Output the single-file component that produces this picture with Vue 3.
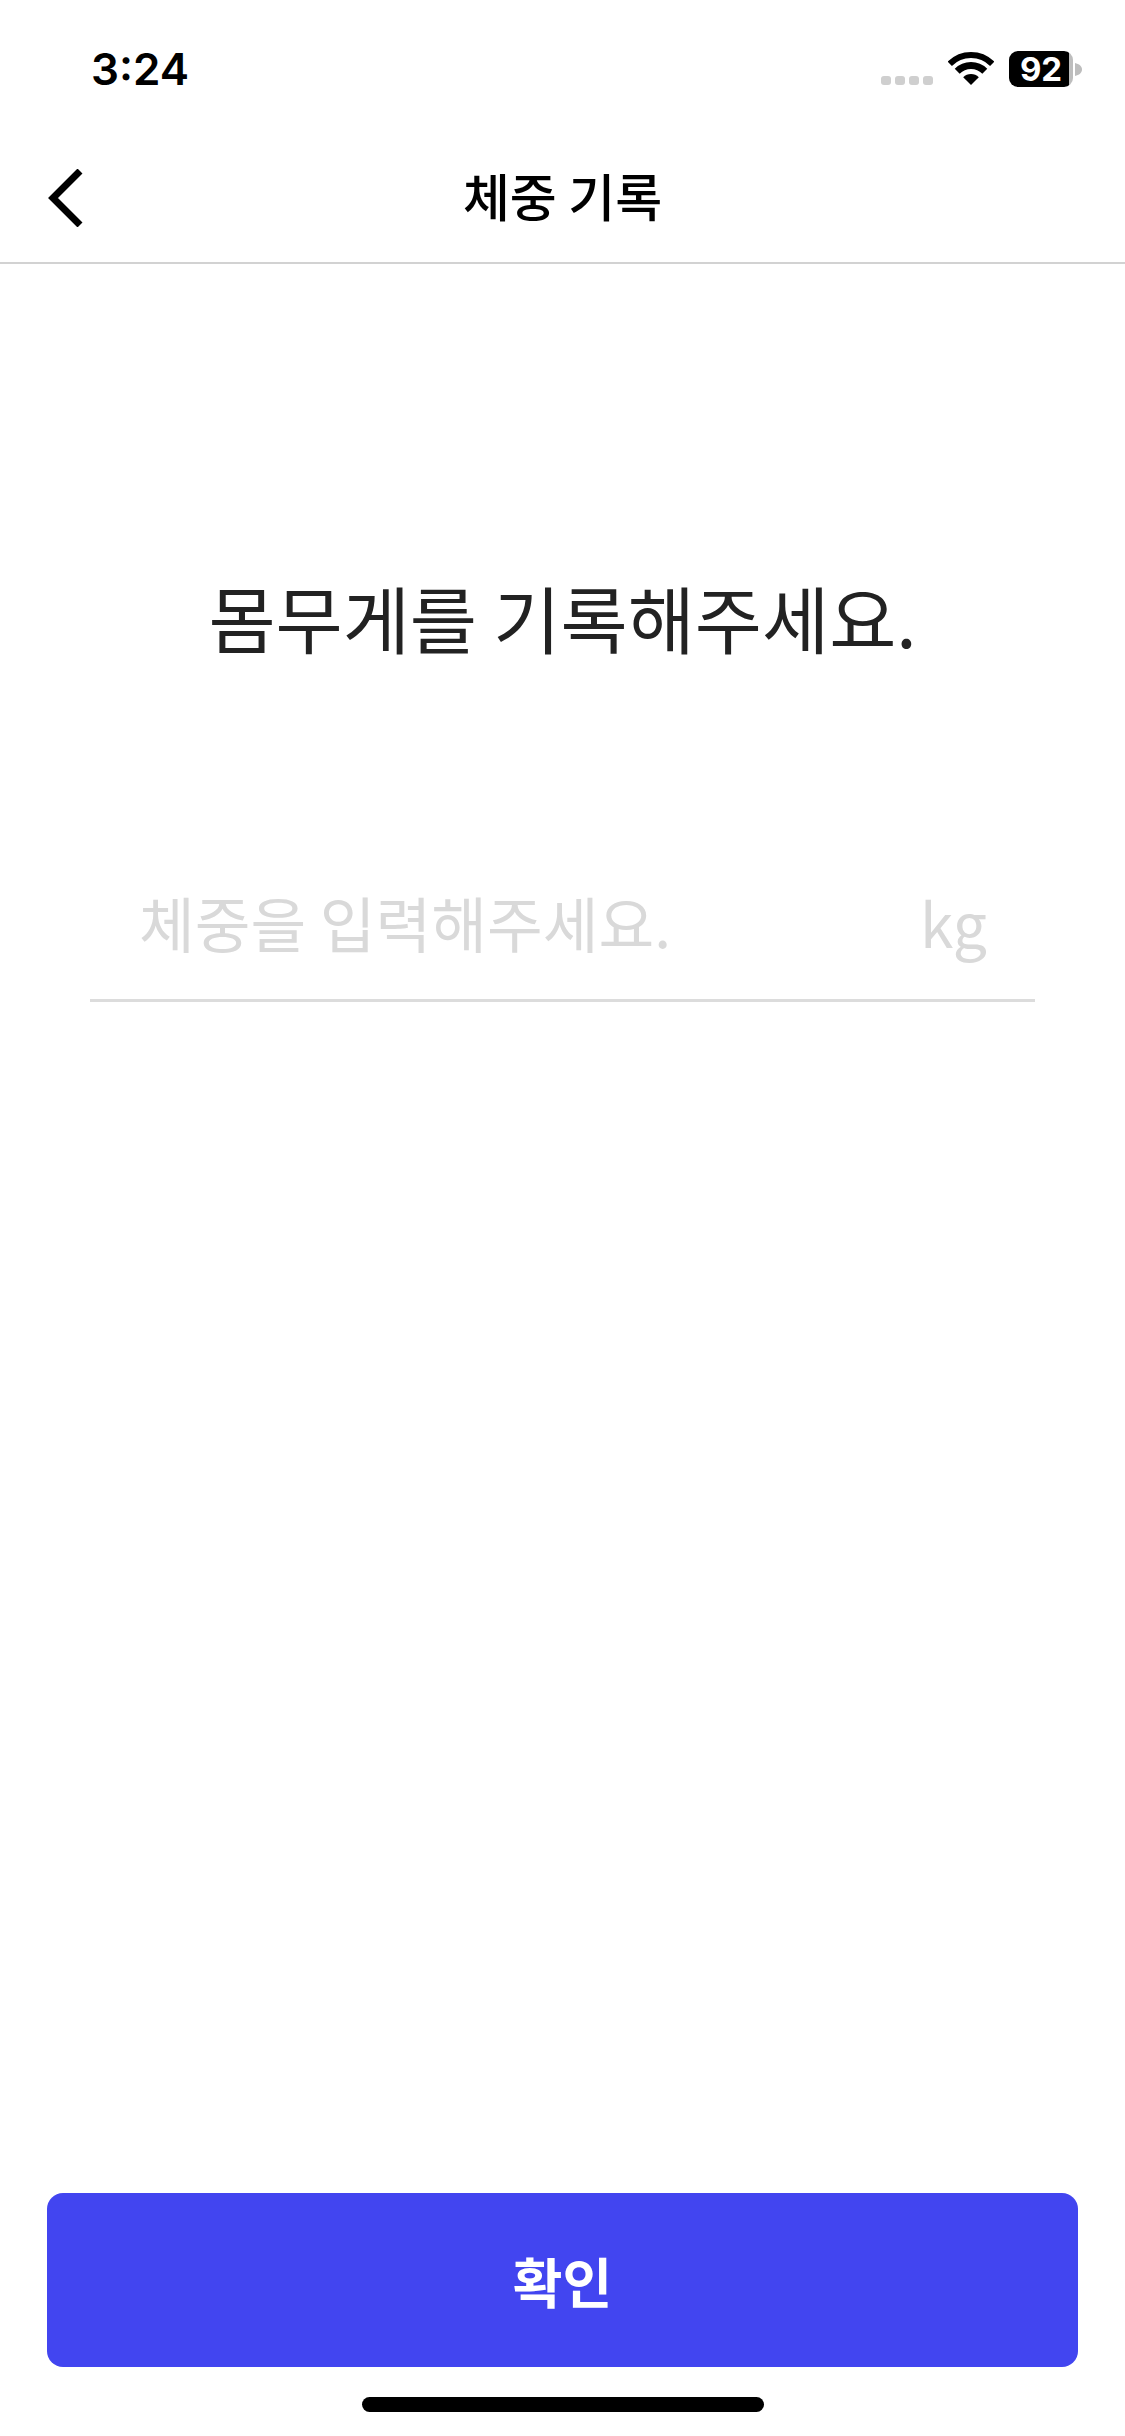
<script setup>
const dots = [1, 2, 3, 4]
</script>

<template>
  <div class="screen">
    <div class="status">
      <span class="time">3:24</span>
      <div class="indicators">
        <div class="dots"><i v-for="d in dots" :key="d" class="dot"></i></div>
        <svg class="wifi" width="46" height="33" viewBox="0 0 46 33">
          <path d="M23 33L15.2 25.2A11 11 0 0 1 30.8 25.2Z" fill="#000" />
          <path d="M9.21 19.21A19.5 19.5 0 0 1 36.79 19.21" fill="none" stroke="#000" stroke-width="7" />
          <path d="M1.79 11.79A30 30 0 0 1 44.21 11.79" fill="none" stroke="#000" stroke-width="6" />
        </svg>
        <div class="battery"><span>92</span></div>
        <svg class="cap" width="7" height="13" viewBox="0 0 7 13">
          <path d="M0 0C4 1 7 3 7 6.5S4 12 0 13Z" fill="#bdbdbd" />
        </svg>
      </div>
    </div>

    <header class="nav">
      <svg class="back" width="36" height="58" viewBox="0 0 36 58">
        <path d="M33 2L6 29L33 56" fill="none" stroke="#000" stroke-width="7" />
      </svg>
      <h1 class="title">체중 기록</h1>
    </header>

    <main class="body">
      <h2 class="heading">몸무게를 기록해주세요.</h2>
      <div class="field">
        <span class="placeholder">체중을 입력해주세요.</span>
        <span class="unit">kg</span>
      </div>
    </main>

    <footer class="footer">
      <button class="confirm">확인</button>
      <div class="home"></div>
    </footer>
  </div>
</template>

<style scoped>
.screen {
  width: 1125px;
  height: 2436px;
  display: flex;
  flex-direction: column;
  background: #fff;
  font-family: "Noto Sans CJK KR", "Noto Sans", sans-serif;
  overflow: hidden;
}
.status {
  height: 88px;
  flex: none;
  display: flex;
  justify-content: space-between;
  align-items: flex-start;
  padding: 0 43px 0 91px;
}
.time {
  margin-top: 42px;
  font-family: Inter, sans-serif;
  font-weight: 600;
  font-size: 44px;
  line-height: 54px;
  color: #000;
}
.indicators {
  display: flex;
  align-items: flex-start;
  margin-top: 51px;
}
.dots {
  display: flex;
  gap: 4px;
  margin-top: 25px;
}
.dot {
  width: 10px;
  height: 9px;
  border-radius: 3px;
  background: #cfcfcf;
}
.wifi {
  margin: 1px 15px 0 15px;
}
.battery {
  width: 64px;
  height: 36px;
  border-radius: 9px;
  background: linear-gradient(to right, #000 94%, #bdbdbd 94%);
  display: flex;
  align-items: center;
  justify-content: center;
}
.battery span {
  font-family: Inter, sans-serif;
  font-weight: 700;
  font-size: 33px;
  line-height: 36px;
  color: #fff;
}
.cap {
  margin: 12px 0 0 2px;
}
.nav {
  height: 176px;
  flex: none;
  box-sizing: border-box;
  border-bottom: 2px solid #d2d2d2;
  padding-top: 40px;
  display: flex;
  align-items: center;
  justify-content: center;
  position: relative;
}
.back {
  position: absolute;
  left: 47px;
  top: 81px;
}
.title {
  margin: 0;
  font-size: 51px;
  line-height: 70px;
  font-weight: 500;
  color: #000;
}
.body {
  flex: 1;
  display: flex;
  flex-direction: column;
  align-items: center;
  padding: 302px 90px 0;
}
.heading {
  margin: 0;
  font-size: 73px;
  line-height: 100px;
  font-weight: 400;
  color: #222;
}
.field {
  align-self: stretch;
  margin-top: 178px;
  height: 158px;
  box-sizing: border-box;
  border-bottom: 3px solid #dcdcdc;
  display: flex;
  justify-content: space-between;
  align-items: center;
  padding: 0 48px 0 49px;
}
.placeholder,
.unit {
  font-size: 60.6px;
  line-height: 84px;
  color: #d9d9d9;
}
.footer {
  flex: none;
  display: flex;
  flex-direction: column;
  align-items: center;
  padding: 0 47px 24px;
}
.confirm {
  width: 100%;
  height: 174px;
  border: none;
  border-radius: 16px;
  background: #4245f0;
  color: #fff;
  font-family: inherit;
  font-size: 54px;
  font-weight: 700;
}
.home {
  width: 402px;
  height: 15px;
  margin-top: 30px;
  border-radius: 8px;
  background: #000;
}
</style>

<style>
html,
body {
  margin: 0;
  background: #fff;
}
</style>
